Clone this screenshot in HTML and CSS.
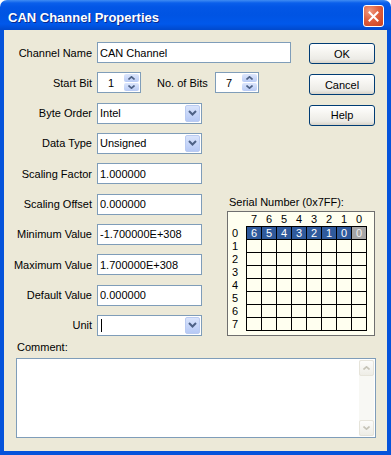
FILE: index.html
```html
<!DOCTYPE html>
<html lang="en">

<head>
    <meta charset="UTF-8">
    <meta name="viewport" content="width=device-width, initial-scale=1.0">
    <title>CAN Channel Properties</title>
    <link rel="stylesheet" href="styles.css">
</head>

<body>
    <div class="window">
        <!-- title bar -->
        <div class="titlebar">
            <span class="title">CAN Channel Properties</span>
            <div class="close">
                <svg width="13" height="13" viewBox="0 0 13 13">
                    <path d="M2.5 2.5 L10.5 10.5 M10.5 2.5 L2.5 10.5" stroke="#fff" stroke-width="2" stroke-linecap="square" />
                </svg>
            </div>
        </div>

        <div class="frame">
            <div class="form">
                <!-- row 1 -->
                <div class="lbl r1">Channel Name</div>
                <div class="edit name r1">CAN Channel</div>
                <div class="btn r1 b1">OK</div>

                <!-- row 2 -->
                <div class="lbl r2">Start Bit</div>
                <div class="pair r2">
                    <div class="spin">
                        <span class="val">1</span>
                        <div class="spin-btns">
                            <span class="sb"><svg width="7" height="4" viewBox="0 0 7 4"><path d="M0.5 3.5 L3.5 0.8 L6.5 3.5" fill="none" stroke="#4D6185" stroke-width="1.6" /></svg></span>
                            <span class="sb"><svg width="7" height="4" viewBox="0 0 7 4"><path d="M0.5 0.5 L3.5 3.2 L6.5 0.5" fill="none" stroke="#4D6185" stroke-width="1.6" /></svg></span>
                        </div>
                    </div>
                    <span class="pair-lbl">No. of Bits</span>
                    <div class="spin">
                        <span class="val">7</span>
                        <div class="spin-btns">
                            <span class="sb"><svg width="7" height="4" viewBox="0 0 7 4"><path d="M0.5 3.5 L3.5 0.8 L6.5 3.5" fill="none" stroke="#4D6185" stroke-width="1.6" /></svg></span>
                            <span class="sb"><svg width="7" height="4" viewBox="0 0 7 4"><path d="M0.5 0.5 L3.5 3.2 L6.5 0.5" fill="none" stroke="#4D6185" stroke-width="1.6" /></svg></span>
                        </div>
                    </div>
                </div>
                <div class="btn r2 b2">Cancel</div>

                <!-- row 3 -->
                <div class="lbl r3">Byte Order</div>
                <div class="combo r3">
                    <span>Intel</span>
                    <span class="drop"><svg width="9" height="6" viewBox="0 0 9 6"><path d="M1 1 L4.5 4.5 L8 1" fill="none" stroke="#4D6185" stroke-width="2" /></svg></span>
                </div>
                <div class="btn r3 b2">Help</div>

                <!-- row 4 -->
                <div class="lbl r4">Data Type</div>
                <div class="combo r4">
                    <span>Unsigned</span>
                    <span class="drop"><svg width="9" height="6" viewBox="0 0 9 6"><path d="M1 1 L4.5 4.5 L8 1" fill="none" stroke="#4D6185" stroke-width="2" /></svg></span>
                </div>

                <!-- row 5..9 -->
                <div class="lbl r5">Scaling Factor</div>
                <div class="edit r5">1.000000</div>

                <div class="lbl r6">Scaling Offset</div>
                <div class="edit r6">0.000000</div>

                <div class="lbl r7">Minimum Value</div>
                <div class="edit r7">-1.700000E+308</div>

                <div class="lbl r8">Maximum Value</div>
                <div class="edit r8">1.700000E+308</div>

                <div class="lbl r9">Default Value</div>
                <div class="edit r9">0.000000</div>

                <!-- row 10 -->
                <div class="lbl r10">Unit</div>
                <div class="combo r10">
                    <span class="caret"></span>
                    <span class="drop"><svg width="9" height="6" viewBox="0 0 9 6"><path d="M1 1 L4.5 4.5 L8 1" fill="none" stroke="#4D6185" stroke-width="2" /></svg></span>
                </div>

                <!-- serial number matrix -->
                <div class="serial">
                    <div class="serial-title">Serial Number (0x7FF):</div>
                    <div class="serial-box">
                        <div class="bits-head">
                            <span>7</span><span>6</span><span>5</span><span>4</span><span>3</span><span>2</span><span>1</span><span>0</span>
                        </div>
                        <div class="bits-body">
                            <div class="row-nums">
                                <span>0</span><span>1</span><span>2</span><span>3</span><span>4</span><span>5</span><span>6</span><span>7</span>
                            </div>
                            <div class="cells">
                                <span class="on">6</span><span class="on">5</span><span class="on">4</span><span class="on">3</span><span class="on">2</span><span class="on">1</span><span class="on">0</span><span class="off">0</span>
                                <span></span><span></span><span></span><span></span><span></span><span></span><span></span><span></span>
                                <span></span><span></span><span></span><span></span><span></span><span></span><span></span><span></span>
                                <span></span><span></span><span></span><span></span><span></span><span></span><span></span><span></span>
                                <span></span><span></span><span></span><span></span><span></span><span></span><span></span><span></span>
                                <span></span><span></span><span></span><span></span><span></span><span></span><span></span><span></span>
                                <span></span><span></span><span></span><span></span><span></span><span></span><span></span><span></span>
                                <span></span><span></span><span></span><span></span><span></span><span></span><span></span><span></span>
                            </div>
                        </div>
                    </div>
                </div>
            </div>

            <!-- comment -->
            <div class="comment-lbl">Comment:</div>
            <div class="memo">
                <div class="vscroll">
                    <span class="sbtn"><svg width="7" height="4" viewBox="0 0 7 4"><path d="M0.5 3.5 L3.5 0.8 L6.5 3.5" fill="none" stroke="#C6C4B8" stroke-width="1.6" /></svg></span>
                    <span class="sbtn"><svg width="7" height="4" viewBox="0 0 7 4"><path d="M0.5 0.5 L3.5 3.2 L6.5 0.5" fill="none" stroke="#C6C4B8" stroke-width="1.6" /></svg></span>
                </div>
            </div>
        </div>
    </div>
</body>

</html>
```

FILE: styles.css
```css
* {
    margin: 0;
    padding: 0;
    box-sizing: border-box;
}

body {
    background: #fff;
    font-family: "Liberation Sans", Arial, sans-serif;
    font-size: 11px;
    color: #000;
}

.window {
    width: 391px;
    height: 455px;
    display: flex;
    flex-direction: column;
}

/* title bar */
.titlebar {
    height: 30px;
    flex-shrink: 0;
    display: flex;
    align-items: flex-start;
    justify-content: space-between;
    padding: 5px 7px 0 8px;
    border-radius: 7px 7px 0 0;
    background: linear-gradient(to bottom, #3F8CF3 0, #0A5FEB 3px, #0256E6 7px, #0054E3 50%, #0058EB 80%, #0049CC 100%);
}

.title {
    color: #fff;
    font-weight: bold;
    font-size: 13px;
    line-height: 21px;
    padding-top: 2px;
    text-shadow: 1px 1px 0 #0A2A8C;
}

.close {
    width: 21px;
    height: 22px;
    border: 1px solid #fff;
    border-radius: 3px;
    background: radial-gradient(circle at 30% 25%, #F09A80 0, #E0603F 45%, #C8401E 100%);
    display: flex;
    align-items: center;
    justify-content: center;
}

/* window body */
.frame {
    flex: 1;
    background: #ECE9D8;
    border: 4px solid #0553DB;
    border-top: 0;
    padding: 12px 11px 0 12px;
}

.form {
    display: grid;
    grid-template-columns: 81px 105px 25px 148px;
    grid-template-rows: repeat(10, 21px);
    row-gap: 9.33px;
}

.r1 { grid-row: 1; }
.r2 { grid-row: 2; }
.r3 { grid-row: 3; }
.r4 { grid-row: 4; }
.r5 { grid-row: 5; }
.r6 { grid-row: 6; }
.r7 { grid-row: 7; }
.r8 { grid-row: 8; }
.r9 { grid-row: 9; }
.r10 { grid-row: 10; }

.lbl {
    grid-column: 1;
    display: flex;
    align-items: center;
    justify-content: flex-end;
    padding-right: 5px;
    white-space: nowrap;
}

.edit {
    grid-column: 2;
    height: 21px;
    background: #fff;
    border: 1px solid #7F9DB9;
    display: flex;
    align-items: center;
    padding-left: 2px;
    white-space: nowrap;
}

.edit.name {
    grid-column: 2 / 5;
    width: 194px;
}

/* push buttons */
.btn {
    grid-column: 4;
    justify-self: end;
    align-self: start;
    width: 66px;
    height: 21px;
    border: 1px solid #003C74;
    border-radius: 3px;
    background: linear-gradient(to bottom, #FFFFFF 0%, #F6F5F1 40%, #ECEBE6 80%, #D8D3C8 100%);
    display: flex;
    align-items: center;
    justify-content: center;
}

.b1 {
    margin-top: 1px;
}

.b2 {
    margin-top: 2px;
}

/* spin boxes */
.pair {
    grid-column: 2 / 5;
    justify-self: start;
    display: flex;
    align-items: center;
}

.pair-lbl {
    margin-left: 16px;
    width: 58px;
    white-space: nowrap;
}

.spin {
    width: 44px;
    height: 21px;
    background: #fff;
    border: 1px solid #7F9DB9;
    display: flex;
}

.spin .val {
    flex: 1;
    display: flex;
    align-items: center;
    padding-left: 10px;
}

.spin-btns {
    width: 15px;
    margin: 1px;
    display: flex;
    flex-direction: column;
    gap: 1px;
}

.sb {
    flex: 1;
    border-radius: 2px;
    background: linear-gradient(to bottom, #DCE6FC, #B9CBF5);
    display: flex;
    align-items: center;
    justify-content: center;
}

/* drop down boxes */
.combo {
    grid-column: 2;
    background: #fff;
    border: 1px solid #7F9DB9;
    display: flex;
    align-items: center;
    justify-content: space-between;
    padding: 1px 1px 1px 2px;
}

.drop {
    width: 15px;
    align-self: stretch;
    border-radius: 2px;
    border: 1px solid #BACBF1;
    background: linear-gradient(to bottom, #D9E4FC, #B6C9F5);
    display: flex;
    align-items: center;
    justify-content: center;
}

.caret {
    width: 1px;
    height: 13px;
    margin-left: 1px;
    background: #000;
}

/* serial number matrix */
.serial {
    grid-column: 4;
    grid-row: 6 / 11;
    align-self: end;
}

.serial-title {
    padding-left: 2px;
    line-height: 13px;
    margin-bottom: 2px;
}

.serial-box {
    height: 125px;
    background: #FFFFF0;
    border: 1px solid #6F6F6F;
    padding-top: 1px;
}

.bits-head {
    display: grid;
    grid-template-columns: repeat(8, 14px);
    column-gap: 1px;
    margin-left: 19px;
    height: 13px;
    line-height: 13px;
    text-align: center;
}

.bits-body {
    display: flex;
}

.row-nums {
    width: 18px;
    padding: 1px 0 0 4px;
    display: grid;
    grid-auto-rows: 12px;
    row-gap: 1px;
    line-height: 12px;
}

.cells {
    display: grid;
    grid-template-columns: repeat(8, 14px);
    grid-auto-rows: 12px;
    gap: 1px;
    background: #000;
    border: 1px solid #000;
}

.cells span {
    background: #FFFFF0;
    text-align: center;
    line-height: 12px;
}

.cells .on {
    background: #2F5A9C;
    color: #fff;
}

.cells .off {
    background: #A6A6A6;
    color: #F2F2F2;
}

/* comment */
.comment-lbl {
    margin-top: 5px;
    padding-left: 1px;
    line-height: 13px;
}

.memo {
    margin-top: 4px;
    height: 80px;
    background: #fff;
    border: 1px solid #7F9DB9;
    padding: 1px;
    display: flex;
    justify-content: flex-end;
}

.vscroll {
    width: 15px;
    display: flex;
    flex-direction: column;
    justify-content: space-between;
    background: #F8F8F4;
}

.sbtn {
    height: 16px;
    border: 1px solid #E6E4DA;
    border-radius: 2px;
    background: linear-gradient(to bottom, #FCFCFA, #EEEDE6);
    display: flex;
    align-items: center;
    justify-content: center;
}
```
